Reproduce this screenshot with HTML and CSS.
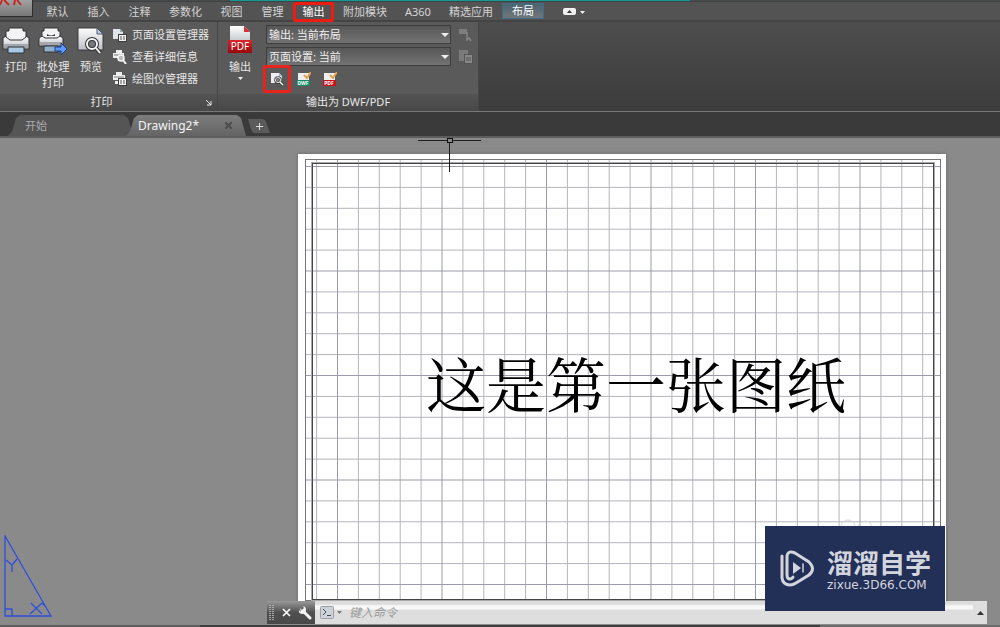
FILE: index.html
```html
<!DOCTYPE html>
<html lang="zh-CN">
<head>
<meta charset="utf-8">
<title>Drawing2</title>
<link rel="stylesheet" href="styles.css">
</head>
<body>
<svg class="defs" aria-hidden="true">
  <defs>
    <linearGradient id="metal" x1="0" y1="0" x2="0" y2="1"><stop offset="0" stop-color="#fff"/><stop offset="1" stop-color="#bcbfc6"/></linearGradient>
    <linearGradient id="red" x1="0" y1="0" x2="0" y2="1"><stop offset="0" stop-color="#d8262c"/><stop offset="1" stop-color="#98070c"/></linearGradient>
    <symbol id="printer" viewBox="0 0 28 28">
      <path d="M1 11l3-2h20l3 2v11H1z" fill="url(#metal)" stroke="#333"/>
      <path d="M2 17h24v4H2z" fill="#a4a7ae"/>
      <path d="M7 1h14v3h3v6l-4 3H8l-4-3V4h3z" fill="#f4f4f6" stroke="#333"/>
      <path d="M6 20h16v6H6z" fill="#a9c9e6" stroke="#333"/>
    </symbol>
    <symbol id="batch-printer" viewBox="0 0 28 28">
      <path d="M1 11l3-2h18l3 2v8H1z" fill="url(#metal)" stroke="#333"/>
      <path d="M2 15h22v3H2z" fill="#a4a7ae"/>
      <path d="M6 1h14v3h2v5l-3 2H7L4 9V4h2z" fill="#f4f4f6" stroke="#333"/>
      <path d="M9 7q4 3 8 0v2H9z" fill="#333"/>
      <path d="M6 19h14v6H6z" fill="#8fb0cc" stroke="#333"/>
    </symbol>
    <symbol id="preview" viewBox="0 0 28 28">
      <path d="M1 1h19l6 6v16H1z" fill="url(#metal)" stroke="#3a3a3a"/>
      <path d="M20 1v6h6z" fill="#b9cee8" stroke="#556"/>
      <circle cx="15" cy="17" r="5" fill="#74777c" stroke="#333" stroke-width="4"/>
      <path d="M19 21l4 5" stroke="#333" stroke-width="4"/>
      <circle cx="15" cy="17" r="5" fill="none" stroke="#f4f4f4" stroke-width="2"/>
      <path d="M19 21l4 5" stroke="#f4f4f4" stroke-width="2"/>
    </symbol>
  </defs>
</svg>

<header class="top">
  <div class="title-line"></div>
  <button class="app-button" aria-label="应用程序菜单">
    <svg width="33" height="17" viewBox="0 0 33 17"><path d="M2 0L0 5M4 0l5 5M15 0l-1 5M17 0l4 5" stroke="#c52a24" stroke-width="2" fill="none"/></svg>
  </button>
  <nav class="menu">
    <button>默认</button><button>插入</button><button>注释</button><button>参数化</button><button>视图</button><button>管理</button><button class="marked">输出</button><button>附加模块</button><button>A360</button><button>精选应用</button><button class="current">布局</button>
    <button class="collapse" aria-label="最小化功能区">
      <svg width="22" height="8" viewBox="0 0 22 8"><rect x="0" y="0" width="13" height="7" rx="2" fill="#f2f2f2"/><path d="M4 5l2.500-3L9 5z" fill="#333"/><path d="M17 3h5l-2.500 3z" fill="#f2f2f2"/></svg>
    </button>
  </nav>
</header>

<section class="ribbon">
  <div class="panel panel-print">
    <div class="panel-body">
      <button class="big"><svg width="28" height="28"><use href="#printer"/></svg><span>打印</span></button>
      <button class="big batch">
        <svg width="30" height="28" viewBox="0 0 30 28"><use href="#batch-printer" width="28" height="28"/><path d="M17 20h6v-4l6 6-6 6v-4h-6z" fill="#5c9bff" stroke="#1e3f86"/></svg>
        <span>批处理<br>打印</span>
      </button>
      <button class="big"><svg width="28" height="28"><use href="#preview"/></svg><span>预览</span></button>
      <div class="small-list">
        <button>
          <svg width="14" height="14" viewBox="0 0 14 14"><path d="M0 1h7l3 3v7H0z" fill="#dfe3ea"/><path d="M7 1v3h3z" fill="#8aa"/><path d="M5 6h9v8H5z" fill="#3c3c3c"/><path d="M6 7h7v6H6z" fill="#f2f2f2"/><path d="M7 9h2m1 0h2M7 11h2m1 0h2" stroke="#555"/></svg>
          页面设置管理器
        </button>
        <button>
          <svg width="14" height="14" viewBox="0 0 14 14"><path d="M3 0h6v3h2v5H0V3h3z" fill="#eee"/><path d="M1 5h9" stroke="#777"/><circle cx="8" cy="8" r="3" fill="#bbb" stroke="#f5f5f5" stroke-width="1.500"/><path d="M10 10l3 4" stroke="#f5f5f5" stroke-width="2"/></svg>
          查看详细信息
        </button>
        <button>
          <svg width="14" height="14" viewBox="0 0 14 14"><path d="M3 0h6v3h3v5H0V3h3zM2 9h5v3H2z" fill="#eee"/><path d="M1 5h10" stroke="#777"/><path d="M5 6h9v8H5z" fill="#3c3c3c"/><path d="M6 7h7v6H6z" fill="#f2f2f2"/><path d="M7 9h2m1 0h2M7 11h2m1 0h2" stroke="#555"/></svg>
          绘图仪管理器
        </button>
      </div>
    </div>
    <div class="panel-title"><span>打印</span>
      <button class="launcher" aria-label="打印选项"><svg width="6" height="6" viewBox="0 0 6 6"><path d="M0 0l5 5M5 1v4H1" stroke="#eee" fill="none"/></svg></button>
    </div>
  </div>
  <div class="panel panel-export">
    <div class="panel-body">
      <button class="big pdf">
        <svg width="26" height="30" viewBox="0 0 26 30"><path d="M3 1h14l6 6v12H3z" fill="url(#metal)"/><path d="M17 1v6h6z" fill="#d13237"/><rect x="1" y="15" width="24" height="13" fill="url(#red)"/><text x="13" y="25" text-anchor="middle" class="pdf-label">PDF</text></svg>
        <span>输出</span>
        <svg class="drop" width="5" height="3" viewBox="0 0 5 3"><path d="M0 0h5L2.500 3z" fill="#eee"/></svg>
      </button>
      <div class="export-fields">
        <div class="field-row">
          <select aria-label="输出"><option>输出: 当前布局</option></select>
          <svg width="14" height="14" viewBox="0 0 14 14"><path d="M0 1h8v5H0z" fill="#7c7c7c"/><path d="M8 4v8l2-2 2 3" stroke="#858585" fill="none" stroke-width="1.500"/></svg>
        </div>
        <div class="field-row">
          <select aria-label="页面设置"><option>页面设置: 当前</option></select>
          <svg width="14" height="14" viewBox="0 0 14 14"><path d="M0 0h9v11H0z" fill="#7a7a7a"/><path d="M5 4h9v10H5z" fill="#555"/><path d="M6 5h7v8H6z" fill="#888"/><path d="M7 8h5M7 10h5" stroke="#555"/></svg>
        </div>
        <div class="tools">
          <button class="marked" aria-label="预览"><svg width="14" height="14" viewBox="0 0 14 14"><path d="M1 1h8l3 3v7H1z" fill="#eceef2"/><path d="M9 1v3h3z" fill="#9fb4cc"/><circle cx="8" cy="8" r="2.500" fill="#8b8b8b" stroke="#333" stroke-width="2.500"/><path d="M10 10l3 3" stroke="#333" stroke-width="3"/><circle cx="8" cy="8" r="2.500" fill="none" stroke="#fff"/><path d="M10 10l3 3" stroke="#fff" stroke-width="1.500"/></svg></button>
          <button aria-label="DWF">
            <svg width="14" height="15" viewBox="0 0 14 15"><path d="M1 1h11v7H1z" fill="#eee"/><path d="M0 8h13v6H0z" fill="#168a68"/><path d="M7 3l3 3 4-6" stroke="#e6a04a" stroke-width="2" fill="none"/><text x="6" y="13" text-anchor="middle" class="mini-label">DWF</text></svg>
          </button>
          <button aria-label="PDF">
            <svg width="14" height="15" viewBox="0 0 14 15"><path d="M1 1h11v7H1z" fill="#eee"/><path d="M0 8h13v6H0z" fill="#c9131b"/><path d="M7 3l3 3 4-6" stroke="#e6a04a" stroke-width="2" fill="none"/><text x="6" y="13" text-anchor="middle" class="mini-label">PDF</text></svg>
          </button>
        </div>
      </div>
    </div>
    <div class="panel-title"><span>输出为 DWF/PDF</span></div>
  </div>
</section>

<nav class="files">
  <button class="file start">开始</button>
  <button class="file active"><span>Drawing2*</span><svg width="7" height="7" viewBox="0 0 7 7"><path d="M0 0l7 7M7 0L0 7" stroke="#4c4c4c" stroke-width="2"/></svg></button>
  <button class="add" aria-label="新图形"><svg width="22" height="14" viewBox="0 0 22 14"><path d="M0 0h14q3 0 4 3l4 11H7q-3 0-4-4z" fill="#5b5b5b"/><path d="M11.500 4v7M8 7.500h7" stroke="#ddd"/></svg></button>
</nav>

<main class="canvas">
  <div class="paper">
    <div class="printable">
      <svg class="grid" width="100%" height="100%">
        <defs>
          <pattern id="cells" x="31" y="6" width="104.500" height="104.500" patternUnits="userSpaceOnUse">
            <path d="M21.400 0v104.500M42.300 0v104.500M63.200 0v104.500M84.100 0v104.500M0 21.400h104.500M0 42.300h104.500M0 63.200h104.500M0 84.100h104.500" stroke="#b4b4bc"/>
            <path d="M.5 0v104.500M0 .5h104.500" stroke="#9a9aa8"/>
          </pattern>
        </defs>
        <rect width="100%" height="100%" fill="url(#cells)"/>
      </svg>
      <div class="viewport"></div>
    </div>
    <p class="drawing-text">这是第一张图纸</p>
  </div>
  <svg class="cursor" width="64" height="34" viewBox="0 0 64 34"><path d="M0 2.500h29M34 2.500h29M31.500 5v29" stroke="#202020"/><rect x="29.500" y=".5" width="5" height="4" fill="none" stroke="#111"/></svg>
  <svg class="ucs" width="52" height="84" viewBox="0 0 52 84"><path d="M1 1v80h46zM1 74h7v7M2 25l6 5 5-6M8 30v7M27 68l11 11M26 79l12-11M38 68l4 4" fill="none" stroke="#304edc" stroke-width="1.300"/></svg>
  <div class="command">
    <div class="command-tools">
      <svg width="5" height="16" viewBox="0 0 5 16"><path d="M1 0v16M4 0v16" stroke="#aaa" stroke-width="2" stroke-dasharray="1 1"/></svg>
      <button aria-label="关闭"><svg width="9" height="9" viewBox="0 0 9 9"><path d="M1 1l7 7M8 1L1 8" stroke="#fff" stroke-width="1.600"/></svg></button>
      <button aria-label="自定义"><svg width="14" height="14" viewBox="0 0 14 14"><path d="M5 5l7 7" stroke="#f4f4f4" stroke-width="3" stroke-linecap="round"/><path d="M2 2l2 2 2-2-1-1.500Q8 0 8 4T4 8Q0 7 1 4l2 2" fill="#f4f4f4"/></svg></button>
    </div>
    <label class="prompt">
      <svg width="23" height="13" viewBox="0 0 23 13"><rect x=".5" y=".5" width="13" height="12" rx="1" fill="#cdd2d8" stroke="#9a9fa6"/><path d="M3 3l3 3-3 3M7 9.500h4" stroke="#444c58" fill="none"/><path d="M17 5h5l-2.500 3z" fill="#777"/></svg>
      <input type="text" placeholder="键入命令" aria-label="命令">
    </label>
    <button class="history" aria-label="历史记录"><svg width="7" height="4" viewBox="0 0 7 4"><path d="M0 4h7L3.500 0z" fill="#333"/></svg></button>
  </div>
  <svg class="mark" width="36" height="14" viewBox="0 0 36 14"><circle cx="10" cy="8" r="7" fill="none" stroke="#d8d8d8"/><circle cx="27" cy="9" r="7" fill="none" stroke="#d8d8d8"/></svg>
  <div class="brand">
    <svg width="34" height="37" viewBox="0 0 34 37" fill="none" stroke="#d3d5de" stroke-width="3" stroke-linecap="round">
      <path d="M2 6v22q1 7 8 7 3 0 6-2l13-8q7-6 0-13L15 3q-8-3-8 4v18q0 4 3 4 3-1 3-2"/>
      <path d="M13 12l8 6-8 6z" fill="#d3d5de" stroke="none"/><path d="M23 14v8" stroke-width="1.500"/>
    </svg>
    <div class="brand-text"><strong>溜溜自学</strong><span>zixue.3D66.COM</span></div>
  </div>
</main>
<footer class="status"></footer>
</body>
</html>
```

FILE: styles.css
```css
* { box-sizing: border-box; }
body {
  margin: 0;
  min-height: 100vh;
  display: flex;
  flex-direction: column;
  background: #3a3a3a;
  color: #e6e6e6;
  font: 11px/16px "Noto Sans", "Noto Sans CJK SC", sans-serif;
  overflow: hidden;
}
button, select, input { font: inherit; color: inherit; border: 0; background: none; padding: 0; margin: 0; }
button { display: flex; align-items: center; justify-content: center; white-space: nowrap; }
svg { flex: none; display: block; }
.defs { position: absolute; width: 0; height: 0; }

.top {
  display: grid;
  grid-template-columns: 37px 1fr;
  grid-template-rows: 2px 18px;
  background: #535353;
  border-bottom: 2px solid #444;
}
.title-line {
  grid-row: 1;
  grid-column: 1 / -1;
  height: 1px;
  background: linear-gradient(90deg, #4a4a4a 23%, #169a96 23%, #169a96 69%, #4a4a4a 69%);
  box-shadow: 0 1px #3b4444;
}
.app-button {
  grid-row: 1 / 3;
  grid-column: 1;
  align-self: start;
  width: 33px;
  height: 17px;
  position: relative;
  background: linear-gradient(#a2a2a2, #777);
  border-right: 1px solid #2d2d2d;
  border-bottom: 1px solid #2d2d2d;
}
.menu { grid-row: 2; grid-column: 2; display: flex; color: #d4d4d4; }
.menu button { min-width: 41px; padding: 0 9px; height: 20px; }
.menu .marked { outline: 3px solid #ec1c12; outline-offset: -3px; color: #fff; border-radius: 2px; }
.menu .current { color: #fff; background: linear-gradient(#4c6472, #707779); border: 1px solid #3c6c86; height: 16px; align-self: center; }
.menu .collapse { margin-left: 10px; }

.ribbon { display: flex; height: 90px; background: linear-gradient(#4d4d4d, #3c3c3c); border-bottom: 1px solid #777; }
.panel { display: flex; flex-direction: column; background: #5a5a5a; border-right: 1px solid #464646; }
.panel-print { width: 218px; }
.panel-export { width: 261px; }
.panel-body { flex: 1; min-height: 0; display: flex; align-items: flex-start; padding-top: 5px; }
.panel-export .panel-body { padding-top: 3px; }
.panel-title { height: 17px; display: flex; justify-content: center; background: linear-gradient(#535353, #484848); }
.panel-print .panel-title { position: relative; padding-right: 14px; }
.launcher { position: absolute; right: 5px; top: 6px; }
.big { flex-direction: column; width: 34px; }
.big span { margin-top: 4px; }
.panel-print .big:first-child { width: 32px; }
.panel-print .batch { width: 42px; }
.small-list { display: flex; flex-direction: column; gap: 6px; padding-left: 5px; }
.small-list button { justify-content: flex-start; gap: 5px; }
.pdf { width: 44px; }
.pdf-label { font: 10px "Noto Sans", sans-serif; fill: #fff; }
.mini-label { font: bold 5px "Noto Sans", sans-serif; fill: #fff; }
.drop { margin-top: 2px; }
.export-fields { flex: 1; display: flex; flex-direction: column; gap: 3px; padding: 0 5px 0 4px; }
.field-row { position: relative; display: flex; gap: 8px; align-items: center; }
.field-row select {
  flex: 1;
  height: 19px;
  padding: 0 2px;
  appearance: none;
  border: 1px solid #3d3d3d;
  background: linear-gradient(#585858, #727272);
  color: #f0f0f0;
}
.field-row::after {
  content: "";
  position: absolute;
  right: 24px;
  top: 8px;
  border: 4px solid transparent;
  border-top-color: #eee;
  border-bottom: 0;
}
.tools { display: flex; align-items: center; height: 20px; }
.tools button { width: 26px; height: 20px; }
.tools .marked { margin-left: -3px; width: 28px; height: 28px; border: 3px solid #e8231b; border-radius: 2px; position: relative; }

.files { display: flex; align-items: flex-end; height: 26px; padding-left: 8px; background: #3a3a3a; border-bottom: 2px solid #5d5d5d; }
.file { height: 21px; font-size: 12px; background: #555; clip-path: polygon(0 100%, 4px 80%, 8px 3px, 12px 0, calc(100% - 9px) 0, calc(100% - 5px) 3px, 100% 100%); }
.start { width: 125px; padding-left: 17px; justify-content: flex-start; font-size: 11px; color: #aaa; }
.active { width: 120px; margin-left: -7px; padding: 0 14px 0 12px; justify-content: space-between; background: linear-gradient(#7c7c7c, #646464); color: #f4f4f4; }
.add { margin: 0 0 3px 2px; }

.canvas { flex: 1; position: relative; background: #8a8a8a; overflow: hidden; }
.paper { position: absolute; left: 298px; right: 54px; top: 16px; bottom: 16px; background: #fff; box-shadow: 0 0 4px #6b6b6b; }
.printable { position: absolute; inset: 5px 5px 8px 7px; border: 1px dashed #222; outline: 1px solid #777; outline-offset: -1px; }
.grid { position: absolute; inset: 0; }
.viewport { position: absolute; inset: 3px 6px 0; border: 1px solid #444; box-shadow: 0 0 0 1px #aaa; }
.drawing-text {
  position: absolute;
  left: 128px;
  top: 188px;
  margin: 0;
  color: #000;
  font: 400 60px/80px "Noto Serif CJK SC", "Noto Sans CJK SC", serif;
  white-space: nowrap;
}
.cursor { position: absolute; left: 418px; top: 0; }
.ucs { position: absolute; left: 4px; bottom: 6px; }
.command { position: absolute; left: 267px; right: 13px; bottom: 1px; height: 23px; display: flex; background: #dedede; color: #999; }
.command-tools { width: 48px; display: flex; align-items: center; justify-content: space-between; padding: 0 3px 0 2px; background: linear-gradient(#999, #505050 50%, #484848); }
.prompt { flex: 1; display: flex; align-items: center; gap: 6px; padding-left: 5px; background: linear-gradient(#dcdcdc 3px, #f8f8f8 5px, #f8f8f8 8px, #dedede 9px); }
.prompt input { flex: 1; outline: 0; font-size: 12px; font-style: italic; }
.prompt input::placeholder { color: #999; opacity: 1; }
.history { width: 14px; }
.mark { position: absolute; right: 126px; bottom: 92px; }
.brand { position: absolute; right: 55px; bottom: 14px; width: 180px; height: 85px; display: flex; align-items: center; gap: 13px; padding-left: 15px; background: #222f56; color: #d3d5de; }
.brand-text { display: flex; flex-direction: column; }
.brand strong { font-size: 26px; line-height: 32px; font-weight: 700; }
.brand span { font: 12px/12px "DejaVu Sans", sans-serif; }
.status { height: 2px; background: linear-gradient(90deg, #5e5e5e 20%, #3d3d3d 20%, #3d3d3d 82%, #6b6b6b 82%); }
```
